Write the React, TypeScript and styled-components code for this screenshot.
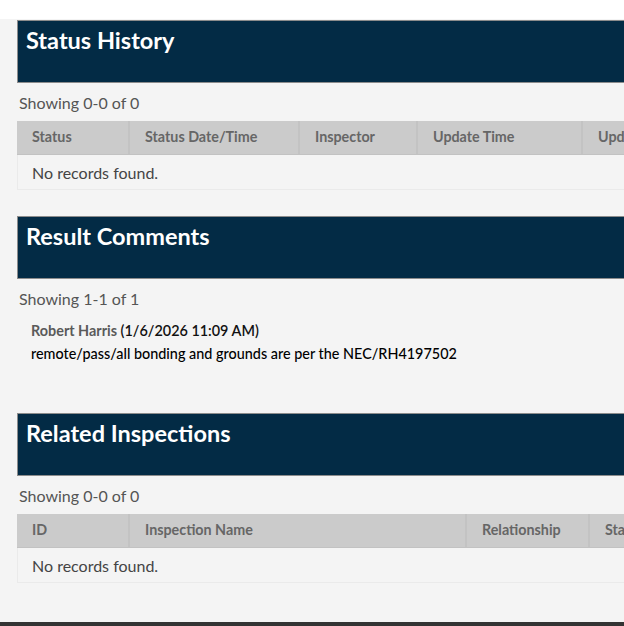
import styled, { createGlobalStyle } from "styled-components";

const GlobalStyle = createGlobalStyle`
  html, body {
    margin: 0;
    padding: 0;
    background: #ffffff;
    overflow: hidden;
  }
  body {
    font-family: Lato, "Open Sans", Arial, sans-serif;
  }
`;

type Column = { label: string; width: number };

const statusColumns: Column[] = [
  { label: "Status", width: 113 },
  { label: "Status Date/Time", width: 170 },
  { label: "Inspector", width: 118 },
  { label: "Update Time", width: 165 },
  { label: "Update By", width: 140 },
];

const relatedColumns: Column[] = [
  { label: "ID", width: 113 },
  { label: "Inspection Name", width: 337 },
  { label: "Relationship", width: 123 },
  { label: "Status", width: 140 },
];

function Section({ title, children }: { title: string; children: React.ReactNode }) {
  return (
    <SectionRoot>
      <SectionHeader>
        <SectionTitle>{title}</SectionTitle>
      </SectionHeader>
      {children}
    </SectionRoot>
  );
}

function EmptyTable({ columns }: { columns: Column[] }) {
  return (
    <Table>
      <HeaderRow>
        {columns.map((col) => (
          <HeaderCell key={col.label} $width={col.width}>
            {col.label}
          </HeaderCell>
        ))}
      </HeaderRow>
      <EmptyRow>No records found.</EmptyRow>
    </Table>
  );
}

export default function App() {
  return (
    <>
      <GlobalStyle />
      <TopStrip />
      <Page>
        <Section title="Status History">
          <Showing>Showing 0-0 of 0</Showing>
          <EmptyTable columns={statusColumns} />
        </Section>

        <Section title="Result Comments">
          <Showing>Showing 1-1 of 1</Showing>
          <Comment>
            <CommentMeta>
              <Author>Robert Harris</Author> (1/6/2026 11:09 AM)
            </CommentMeta>
            <CommentText>remote/pass/all bonding and grounds are per the NEC/RH4197502</CommentText>
          </Comment>
        </Section>

        <Section title="Related Inspections">
          <Showing>Showing 0-0 of 0</Showing>
          <EmptyTable columns={relatedColumns} />
        </Section>
      </Page>
      <Footer />
    </>
  );
}

const TopStrip = styled.div`
  height: 19px;
  background: #ffffff;
`;

const Page = styled.div`
  background: #f4f4f4;
  padding: 1px 0 0 17px;
  height: 603px;
  box-sizing: border-box;
  width: 760px;
  display: flex;
  flex-direction: column;
  gap: 26px;
`;

const SectionRoot = styled.section`
  display: flex;
  flex-direction: column;
  &:nth-child(2) {
    margin-bottom: 22px;
  }
`;

const SectionHeader = styled.div`
  height: 63px;
  box-sizing: border-box;
  background: #032b45;
  border: 1px solid #8c8c8c;
  border-right: none;
  padding: 5px 0 0 8px;
`;

const SectionTitle = styled.h2`
  margin: 0;
  color: #ffffff;
  font-size: 23.5px;
  font-weight: 700;
  line-height: 28px;
`;

const Showing = styled.div`
  color: #555555;
  font-size: 16px;
  line-height: 20px;
  padding: 10px 0 8px 2px;
`;

const Table = styled.div`
  display: flex;
  flex-direction: column;
`;

const HeaderRow = styled.div`
  display: flex;
  height: 34px;
  background: #cbcbcb;
  border-bottom: 1px solid #c2c2c2;
  box-sizing: border-box;
`;

const HeaderCell = styled.div<{ $width: number }>`
  flex: 0 0 ${(p) => p.$width}px;
  box-sizing: border-box;
  padding: 0 15px 2px;
  display: flex;
  align-items: center;
  font-size: 14.3px;
  font-weight: 700;
  color: #666666;
  border-right: 2px solid #c3c3c3;
  white-space: nowrap;
  overflow: hidden;
`;

const EmptyRow = styled.div`
  height: 35px;
  box-sizing: border-box;
  display: flex;
  align-items: center;
  padding-left: 14px;
  font-size: 16px;
  color: #444444;
  border: 1px solid #eaeaea;
  border-top: none;
  border-right: none;
`;

const Comment = styled.div`
  padding: 2px 0 0 14px;
  font-size: 14.4px;
  line-height: 23px;
`;

const CommentMeta = styled.div`
  color: #111111;
  font-weight: 600;
`;

const Author = styled.span`
  color: #5a5a5a;
  font-weight: 700;
`;

const CommentText = styled.div`
  color: #000000;
  font-weight: 500;
`;

const Footer = styled.div`
  height: 4px;
  background: #333333;
`;
